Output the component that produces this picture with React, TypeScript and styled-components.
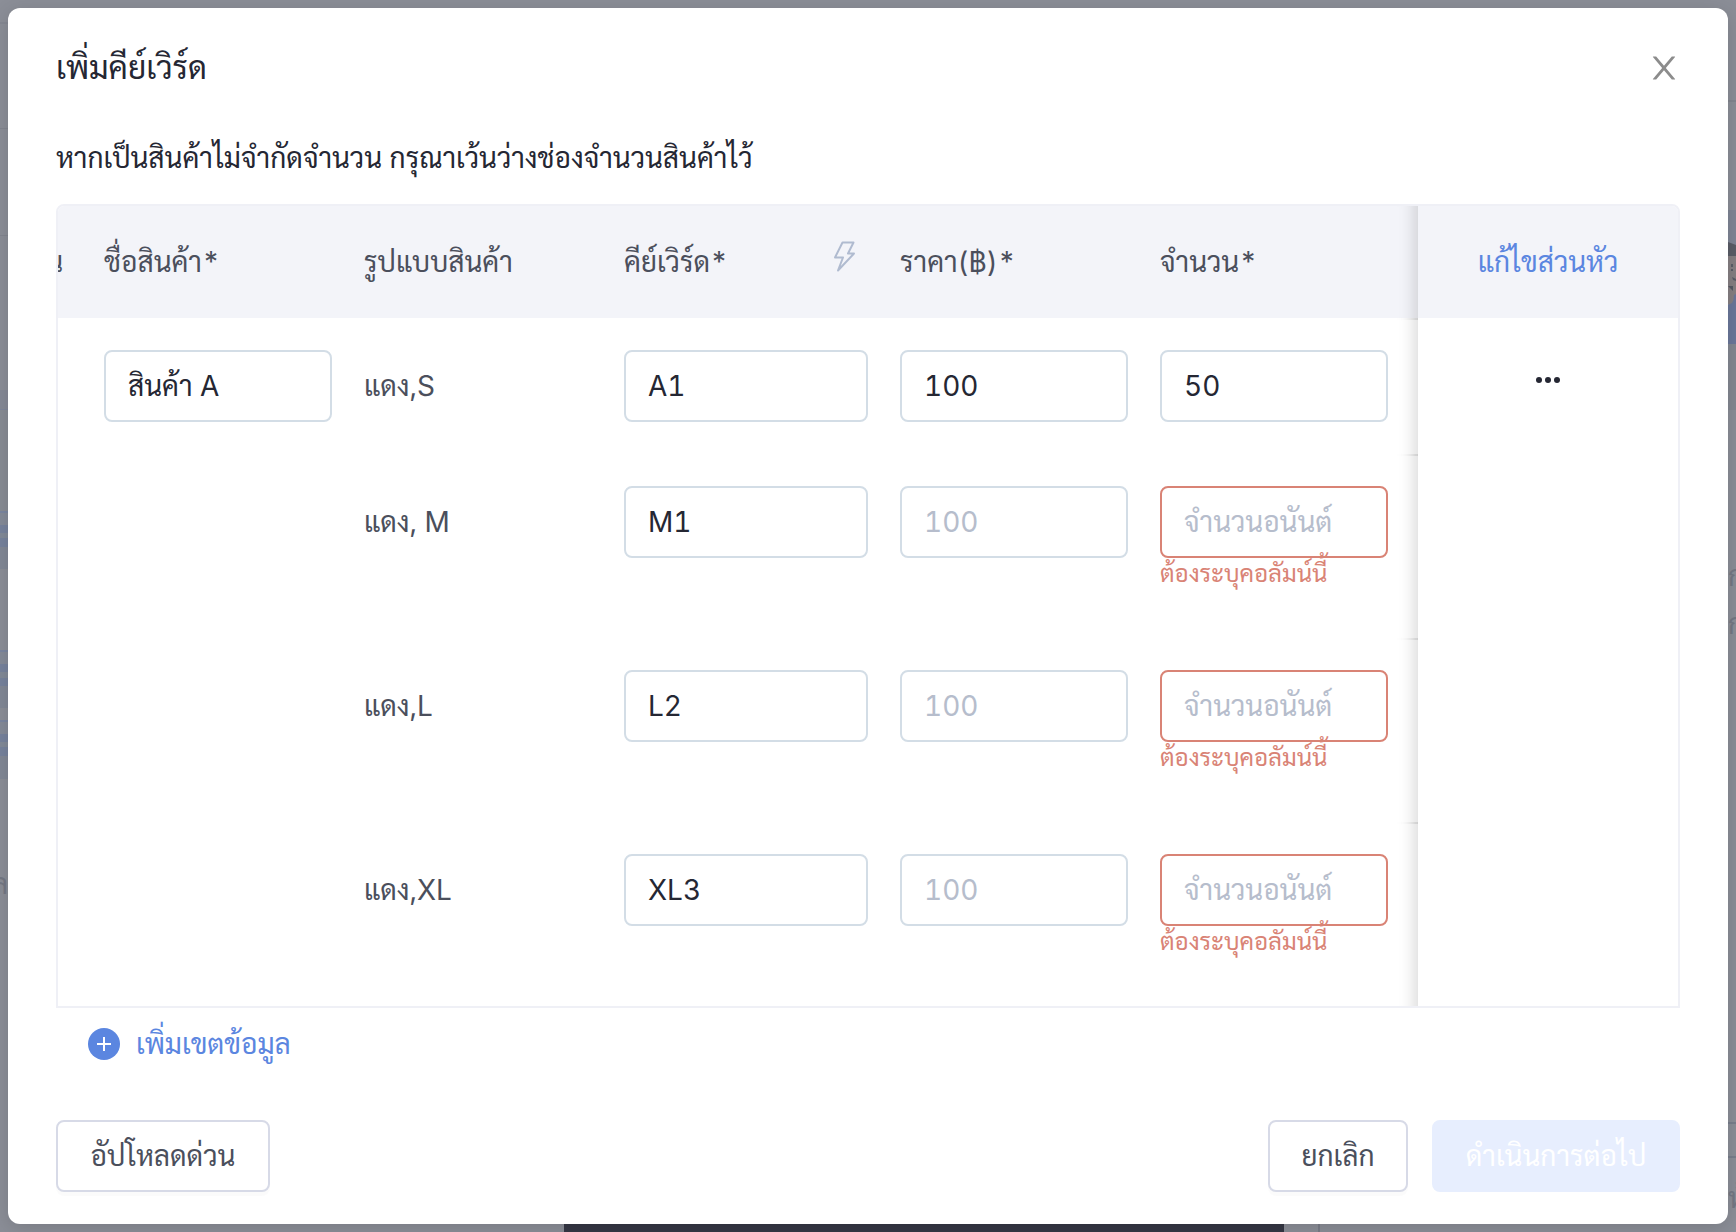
import React, { useState } from 'react';
import styled, { createGlobalStyle } from 'styled-components';

const color = {
  ink: '#252733',
  text: '#4b4f5c',
  blue: '#5b86e0',
  error: '#d98375',
  inputLine: '#d3dde6',
  buttonLine: '#d7dae7',
  tableLine: '#eff0f6',
  headFill: '#f3f4f9',
  muted: '#b6bdcc',
  mask: '#8b8e97',
};

const GlobalStyle = createGlobalStyle`
  *, *::before, *::after { box-sizing: border-box; }
  body {
    margin: 0;
    background: ${color.mask};
    color: ${color.ink};
    font-family: Inter, Sarabun, 'Liberation Sans', sans-serif;
    font-size: 28px;
    line-height: 44px;
    font-variant-numeric: tabular-nums;
  }
  button, input { font: inherit; font-variant-numeric: inherit; color: inherit; }
  button { cursor: pointer; }
  svg { flex: none; }
`;

/* ---------- dimmed page seen around the dialog ---------- */

const Scene = styled.div`
  display: grid;
  grid-template-columns: 8px minmax(0, 1fr) 8px;
  grid-template-rows: 8px auto minmax(8px, 1fr);
  min-height: 100vh;
  background: ${color.mask};
`;

const Rail = styled.div<{ $side: 'left' | 'right' }>`
  grid-column: ${(p) => (p.$side === 'left' ? 1 : 3)};
  grid-row: 1 / -1;
  display: flex;
  flex-direction: column;
  overflow: hidden;
`;

const Strip = styled.div<{ $h: number; $fill?: string }>`
  flex: none;
  height: ${(p) => p.$h}px;
  background: ${(p) => p.$fill ?? 'transparent'};
`;

const Fragment = styled.span<{ $end?: boolean }>`
  flex: none;
  display: flex;
  justify-content: ${(p) => (p.$end ? 'flex-end' : 'flex-start')};
  height: 48px;
  line-height: 48px;
  white-space: nowrap;
  color: #747884;
`;

const BottomEdge = styled.div`
  grid-column: 2;
  grid-row: 3;
  display: flex;
`;

const EdgePart = styled.div<{ $grow: number; $fill?: string }>`
  flex: ${(p) => p.$grow} 0 0;
  background: ${(p) => p.$fill ?? 'transparent'};
`;

/* ---------- dialog ---------- */

const Dialog = styled.section`
  grid-column: 2;
  grid-row: 2;
  z-index: 1;
  min-width: 0;
  padding: 40px 48px 32px;
  border-radius: 12px;
  background: #fff;
  box-shadow: 0 4px 20px rgba(0, 0, 0, 0.14);
`;

const DialogHead = styled.header`
  display: flex;
  align-items: center;
  justify-content: space-between;
  height: 40px;
  margin-bottom: 48px;
`;

const Title = styled.h1`
  margin: 0;
  font-size: 32px;
  line-height: 40px;
  font-weight: 400;
`;

const IconButton = styled.button<{ $size: number }>`
  display: inline-flex;
  align-items: center;
  justify-content: center;
  flex: none;
  width: ${(p) => p.$size}px;
  height: ${(p) => p.$size}px;
  padding: 0;
  border: 0;
  background: none;
`;

const Hint = styled.p`
  margin: 0 0 24px;
`;

const TableFrame = styled.div`
  overflow: auto hidden;
  border: 2px solid ${color.tableLine};
  border-radius: 8px 8px 0 0;
`;

const Table = styled.table`
  width: 100%;
  min-width: 1620px;
  table-layout: fixed;
  border-collapse: separate;
  border-spacing: 0;
`;

const Col = styled.col<{ $w: number }>`
  width: ${(p) => p.$w}px;
`;

const HeadCell = styled.th`
  height: 112px;
  padding: 0 16px;
  background: ${color.headFill};
  color: ${color.text};
  font-weight: 400;
  text-align: left;
  white-space: nowrap;
`;

const HeadRow = styled.div`
  display: flex;
  align-items: center;
  justify-content: space-between;
`;

/* Tail of the column that has been scrolled past */
const HeadTail = styled.div`
  display: flex;
  justify-content: flex-end;
  width: 5px;
  overflow: hidden;
`;

const TailCell = styled(HeadCell)`
  padding: 0;
`;

const BodyCell = styled.td`
  padding: 32px 16px;
  vertical-align: top;
  color: ${color.text};
  line-height: 72px;
`;

const EmptyCell = styled.td`
  padding: 0;
`;

const edgeShadow = `
  position: sticky;
  right: 0;
  text-align: center;

  &::before {
    content: '';
    position: absolute;
    top: 0;
    bottom: -2px;
    left: -60px;
    width: 60px;
    pointer-events: none;
    box-shadow: inset -20px 0 16px -16px rgba(0, 0, 0, 0.15);
  }
`;

const FixedHeadCell = styled(HeadCell)`
  ${edgeShadow}
`;

const FixedCell = styled.td`
  ${edgeShadow}
  padding: 38px 16px;
  vertical-align: top;
  line-height: 0;
  background: #fff;
`;

const Field = styled.div<{ $invalid?: boolean }>`
  display: flex;
  flex-direction: column;
  padding-bottom: ${(p) => (p.$invalid ? 16 : 0)}px;
`;

const TextInput = styled.input<{ $invalid?: boolean }>`
  display: block;
  width: 100%;
  height: 72px;
  padding: 0 22px;
  border: 2px solid ${(p) => (p.$invalid ? color.error : color.inputLine)};
  border-radius: 8px;
  outline: 0;
  background: #fff;
  color: ${color.ink};

  &::placeholder {
    color: ${color.muted};
    opacity: 1;
  }
`;

const ErrorText = styled.span`
  color: ${color.error};
  font-size: 24px;
  line-height: 32px;
  white-space: nowrap;
`;

const LinkButton = styled.button`
  padding: 0;
  border: 0;
  background: none;
  color: ${color.blue};
`;

const AddRow = styled(LinkButton)`
  display: flex;
  align-items: center;
  gap: 16px;
  height: 72px;
  margin-bottom: 40px;
  padding: 0 32px;
`;

const Footer = styled.footer`
  display: flex;
  justify-content: space-between;
`;

const Actions = styled.div`
  display: flex;
  gap: 24px;
`;

const Button = styled.button<{ $min: number }>`
  min-width: ${(p) => p.$min}px;
  height: 72px;
  padding: 0 28px;
  border: 2px solid ${color.buttonLine};
  border-radius: 8px;
  background: #fff;
  color: ${color.text};
  box-shadow: 0 4px 0 rgba(0, 0, 0, 0.015);
  white-space: nowrap;
`;

const PrimaryButton = styled(Button)`
  border-color: #e7eefe;
  background: #e7eefe;
  color: #fff;
  box-shadow: none;
  cursor: not-allowed;
`;

/* ---------- icons ---------- */

const CloseIcon = () => (
  <svg width="36" height="36" viewBox="0 0 1024 1024" fill="#8c8c8c" aria-hidden="true">
    <path d="M563.8 512l262.5-312.9c4.4-5.2.7-13.1-6.1-13.1h-79.8c-4.7 0-9.2 2.1-12.3 5.7L511.6 449.8 295.1 191.7c-3-3.6-7.5-5.7-12.3-5.7H203c-6.8 0-10.5 7.9-6.1 13.1L459.4 512 196.9 824.9A7.95 7.95 0 0 0 203 838h79.8c4.7 0 9.2-2.1 12.3-5.7l216.5-258.1 216.5 258.1c3 3.6 7.5 5.7 12.3 5.7h79.8c6.8 0 10.5-7.9 6.1-13.1L563.8 512z" />
  </svg>
);

const BoltIcon = () => (
  <svg width="48" height="48" viewBox="0 0 48 48" fill="none" stroke="#b0bbd0" strokeWidth="2" strokeLinejoin="round" aria-hidden="true">
    <path d="M22.5 4.5H33.5L28 15.5H34L18 32.5L23 19.5H15Z" />
  </svg>
);

const MoreIcon = () => (
  <svg width="28" height="28" viewBox="0 0 28 28" fill={color.ink} aria-hidden="true">
    <circle cx="5" cy="14" r="3" />
    <circle cx="14" cy="14" r="3" />
    <circle cx="23" cy="14" r="3" />
  </svg>
);

const PlusIcon = () => (
  <svg width="32" height="32" viewBox="0 0 32 32" aria-hidden="true">
    <circle cx="16" cy="16" r="16" fill={color.blue} />
    <path d="M16 9V23M9 16H23" stroke="#fff" strokeWidth="2" />
  </svg>
);

const Portrait = () => (
  <svg width="8" height="134" viewBox="0 0 8 134" aria-hidden="true">
    <rect width="8" height="134" fill="#7f8595" />
    <path d="M0 32L8 35V54H0Z" fill="#5a5d67" />
    <path d="M0 46H8V96L0 94Z" fill="#857f82" />
    <path d="M4 93Q6 90 6 85L8 84V134H0V95Z" fill="#6b779a" />
    <path d="M0 76L5 76V81Z" fill="#555964" />
    <path d="M3 54h2v3h-2zM3 59h2v2h-2zM4 67l4 2v2l-3-1z" fill="#5a5d67" />
  </svg>
);

/* ---------- data ---------- */

const rows = [
  { name: 'สินค้า A', variant: 'แดง,S', keyword: 'A1', price: '100', amount: '50' },
  { variant: 'แดง, M', keyword: 'M1', price: '', amount: '' },
  { variant: 'แดง,L', keyword: 'L2', price: '', amount: '' },
  { variant: 'แดง,XL', keyword: 'XL3', price: '', amount: '' },
];

const leftStrips: [number, string?][] = [
  [22], [2, '#858892'], [104], [1, '#82858f'], [106], [1, '#82858f'], [154], [19, '#858996'], [1, '#7f869a'],
  [101, '#888c94'], [2, '#7b86a0'], [12, '#858b98'], [8, '#77839d'], [5, '#828a98'], [9, '#77839d'], [22, '#828896'],
  [81], [2, '#7b86a0'], [12, '#858b98'], [8, '#77839d'], [6, '#828a98'], [8, '#77839d'], [22, '#828896'],
  [12], [2, '#7b86a0'], [12, '#858b98'], [8, '#77839d'], [5, '#828a98'], [9, '#77839d'], [23, '#828896'], [81],
];

const isMissing = (value: string) => value.trim() === '';

export default function App() {
  const [data, setData] = useState(rows);
  const edit = (index: number, key: string, value: string) =>
    setData(data.map((row, i) => (i === index ? { ...row, [key]: value } : row)));

  return (
    <>
      <GlobalStyle />
      <Scene>
        <Rail $side="left" aria-hidden="true">
          {leftStrips.map(([h, fill], i) => (
            <Strip key={i} $h={h} $fill={fill} />
          ))}
          <Fragment $end>เล</Fragment>
        </Rail>
        <Rail $side="right" aria-hidden="true">
          <Strip $h={100} />
          <Strip $h={2} $fill="#82858f" />
          <Strip $h={108} />
          <Portrait />
          <Strip $h={66} $fill="#838791" />
          <Strip $h={142} />
          <Fragment>ก่</Fragment>
          <Fragment>กำ</Fragment>
          <Strip $h={474} />
          <Strip $h={2} $fill="#797e8c" />
          <Strip $h={32} />
          <Strip $h={2} $fill="#797e8c" />
          <Strip $h={16} />
          <Fragment>ห้</Fragment>
        </Rail>

        <Dialog role="dialog" aria-labelledby="dialog-title">
          <DialogHead>
            <Title id="dialog-title">เพิ่มคีย์เวิร์ด</Title>
            <IconButton $size={32} type="button" aria-label="ปิด">
              <CloseIcon />
            </IconButton>
          </DialogHead>

          <Hint>หากเป็นสินค้าไม่จำกัดจำนวน กรุณาเว้นว่างช่องจำนวนสินค้าไว้</Hint>

          <TableFrame>
            <Table>
              <colgroup>
                <Col $w={30} />
                <Col $w={260} />
                <Col $w={260} />
                <Col $w={276} />
                <Col $w={260} />
                <Col $w={260} />
                <Col $w={14} />
                <Col $w={260} />
              </colgroup>
              <thead>
                <tr>
                  <TailCell>
                    <HeadTail>น</HeadTail>
                  </TailCell>
                  <HeadCell>ชื่อสินค้า*</HeadCell>
                  <HeadCell>รูปแบบสินค้า</HeadCell>
                  <HeadCell>
                    <HeadRow>
                      คีย์เวิร์ด*
                      <IconButton $size={48} type="button" aria-label="คีย์เวิร์ด">
                        <BoltIcon />
                      </IconButton>
                    </HeadRow>
                  </HeadCell>
                  <HeadCell>ราคา(฿)*</HeadCell>
                  <HeadCell>จำนวน*</HeadCell>
                  <TailCell />
                  <FixedHeadCell>
                    <LinkButton type="button">แก้ไขส่วนหัว</LinkButton>
                  </FixedHeadCell>
                </tr>
              </thead>
              <tbody>
                {data.map((row, i) => {
                  const invalid = isMissing(row.amount);
                  return (
                    <tr key={i}>
                      <EmptyCell />
                      <BodyCell>
                        {row.name !== undefined && (
                          <TextInput
                            aria-label="ชื่อสินค้า"
                            value={row.name}
                            onChange={(e) => edit(i, 'name', e.target.value)}
                          />
                        )}
                      </BodyCell>
                      <BodyCell>{row.variant}</BodyCell>
                      <BodyCell>
                        <TextInput
                          aria-label="คีย์เวิร์ด"
                          value={row.keyword}
                          onChange={(e) => edit(i, 'keyword', e.target.value)}
                        />
                      </BodyCell>
                      <BodyCell>
                        <TextInput
                          aria-label="ราคา"
                          placeholder="100"
                          value={row.price}
                          onChange={(e) => edit(i, 'price', e.target.value)}
                        />
                      </BodyCell>
                      <BodyCell>
                        <Field $invalid={invalid}>
                          <TextInput
                            aria-label="จำนวน"
                            aria-invalid={invalid}
                            $invalid={invalid}
                            placeholder="จำนวนอนันต์"
                            value={row.amount}
                            onChange={(e) => edit(i, 'amount', e.target.value)}
                          />
                          {invalid && <ErrorText>ต้องระบุคอลัมน์นี้</ErrorText>}
                        </Field>
                      </BodyCell>
                      <EmptyCell />
                      <FixedCell>
                        {row.name !== undefined && (
                          <IconButton $size={48} type="button" aria-label="ตัวเลือก">
                            <MoreIcon />
                          </IconButton>
                        )}
                      </FixedCell>
                    </tr>
                  );
                })}
              </tbody>
            </Table>
          </TableFrame>

          <AddRow type="button">
            <PlusIcon />
            เพิ่มเขตข้อมูล
          </AddRow>

          <Footer>
            <Button type="button" $min={214}>อัปโหลดด่วน</Button>
            <Actions>
              <Button type="button" $min={140}>ยกเลิก</Button>
              <PrimaryButton type="button" $min={248} disabled>
                ดำเนินการต่อไป
              </PrimaryButton>
            </Actions>
          </Footer>
        </Dialog>

        <BottomEdge aria-hidden="true">
          <EdgePart $grow={556} />
          <EdgePart $grow={720} $fill="#353744" />
          <EdgePart $grow={34} />
          <EdgePart $grow={2} $fill="#797c87" />
          <EdgePart $grow={408} />
        </BottomEdge>
      </Scene>
    </>
  );
}
